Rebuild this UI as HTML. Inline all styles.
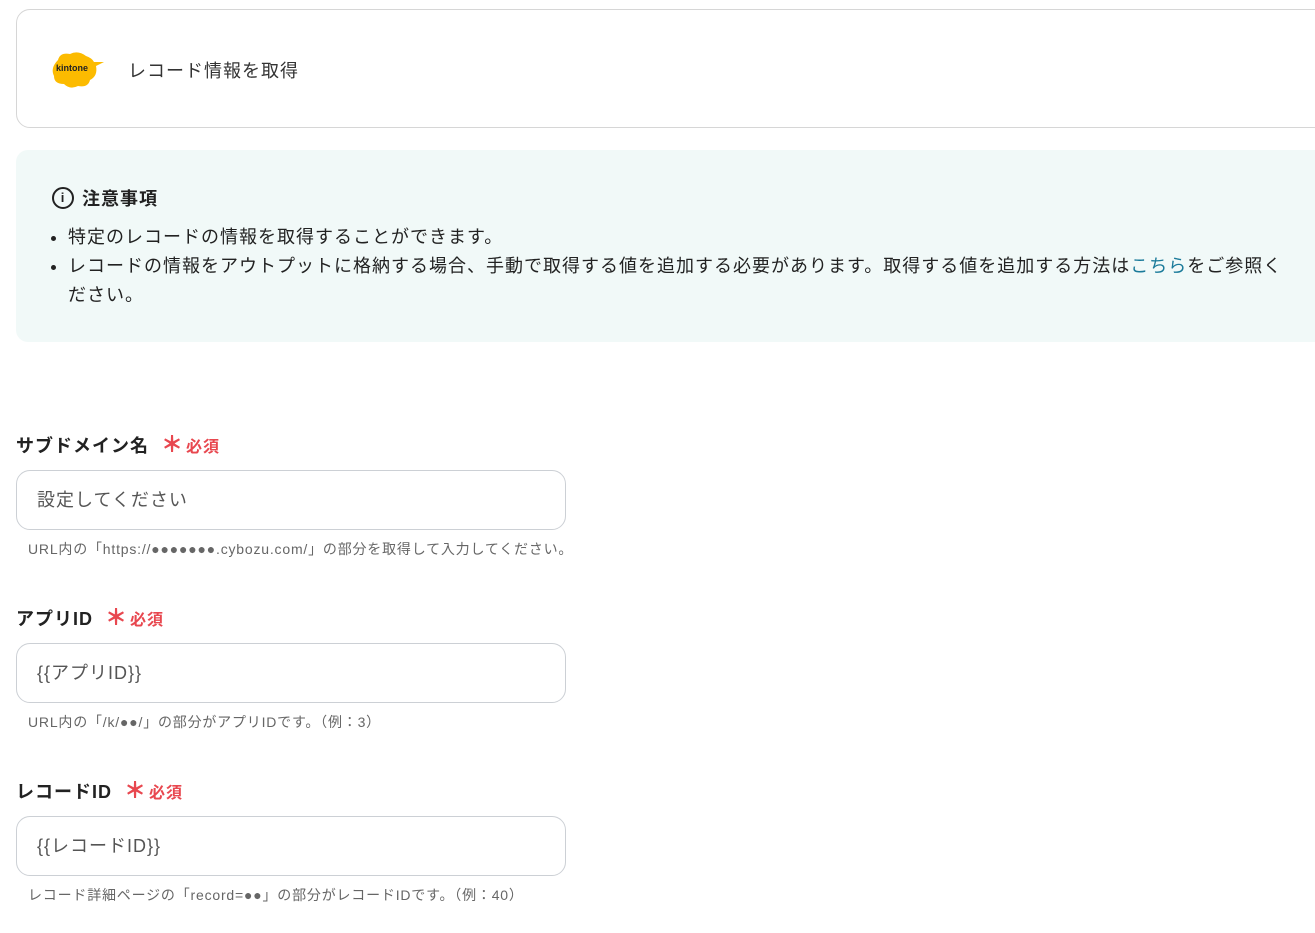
<!DOCTYPE html>
<html><head><meta charset="utf-8"><style>
body{margin:0;width:1315px;height:933px;overflow:hidden;background:#fff;font-family:"Liberation Sans","Noto Sans CJK JP",sans-serif;color:#333;}
.card{position:absolute;left:16px;top:9px;width:1320px;height:117px;border:1px solid #d6d6d6;border-radius:14px;}
.title{position:absolute;left:128px;top:57px;font-size:18px;letter-spacing:1px;}
.note{position:absolute;left:16px;top:150px;width:1320px;height:192px;background:#f1f9f8;border-radius:12px;}
.nh{position:absolute;left:52px;top:185px;font-size:18px;font-weight:bold;display:flex;align-items:center;gap:8px;letter-spacing:1px;color:#222;}
.ic{width:22px;height:22px;border:2px solid #222;border-radius:50%;box-sizing:border-box;font-size:13px;text-align:center;line-height:18px;font-weight:bold;}
ul{position:absolute;left:48px;top:223px;margin:0;padding-left:20px;font-size:18px;line-height:29px;width:1218px;color:#222;letter-spacing:1px;}
a{color:#1a7a9a;text-decoration:none;}
.lab{position:absolute;left:16px;font-size:18px;font-weight:bold;color:#222;letter-spacing:1px;}
.lab span{color:#e8474f;font-size:16px;margin-left:6px;}
.lab b{font-size:22px;margin-right:2px;}
.in{position:absolute;left:16px;border:1px solid #ccd0d5;border-radius:14px;font-size:18px;color:#555;line-height:58px;padding-left:20px;box-sizing:border-box;width:550px;height:60px;letter-spacing:1px;}
.hint{position:absolute;left:28px;font-size:14px;color:#666;letter-spacing:0.8px;}
</style></head><body>
<div class="card"></div>
<svg style="position:absolute;left:50px;top:50px" width="56" height="40" viewBox="0 0 56 40"><path d="M8 10 Q10 2 20 4 Q28 0 36 6 Q42 8 44 12 L54 12 L46 16 Q48 26 40 30 Q38 38 28 36 Q20 40 14 34 Q4 34 4 26 Q0 18 8 10Z" fill="#fcbb00"/><text x="6" y="21" font-size="9" font-weight="bold" fill="#222" font-family="Liberation Sans">kintone</text></svg>
<div class="title">レコード情報を取得</div>
<div class="note"></div>
<div class="nh"><div class="ic">i</div>注意事項</div>
<ul><li>特定のレコードの情報を取得することができます。</li><li>レコードの情報をアウトプットに格納する場合、手動で取得する値を追加する必要があります。取得する値を追加する方法は<a>こちら</a>をご参照ください。</li></ul>
<div class="lab" style="top:427px">サブドメイン名 <span><b>＊</b>必須</span></div>
<div class="in" style="top:470px">設定してください</div>
<div class="hint" style="top:539px">URL内の「https://●●●●●●●.cybozu.com/」の部分を取得して入力してください。</div>
<div class="lab" style="top:600px">アプリID <span><b>＊</b>必須</span></div>
<div class="in" style="top:643px">{{アプリID}}</div>
<div class="hint" style="top:712px">URL内の「/k/●●/」の部分がアプリIDです。（例：3）</div>
<div class="lab" style="top:773px">レコードID <span><b>＊</b>必須</span></div>
<div class="in" style="top:816px">{{レコードID}}</div>
<div class="hint" style="top:885px">レコード詳細ページの「record=●●」の部分がレコードIDです。（例：40）</div>
</body></html>
